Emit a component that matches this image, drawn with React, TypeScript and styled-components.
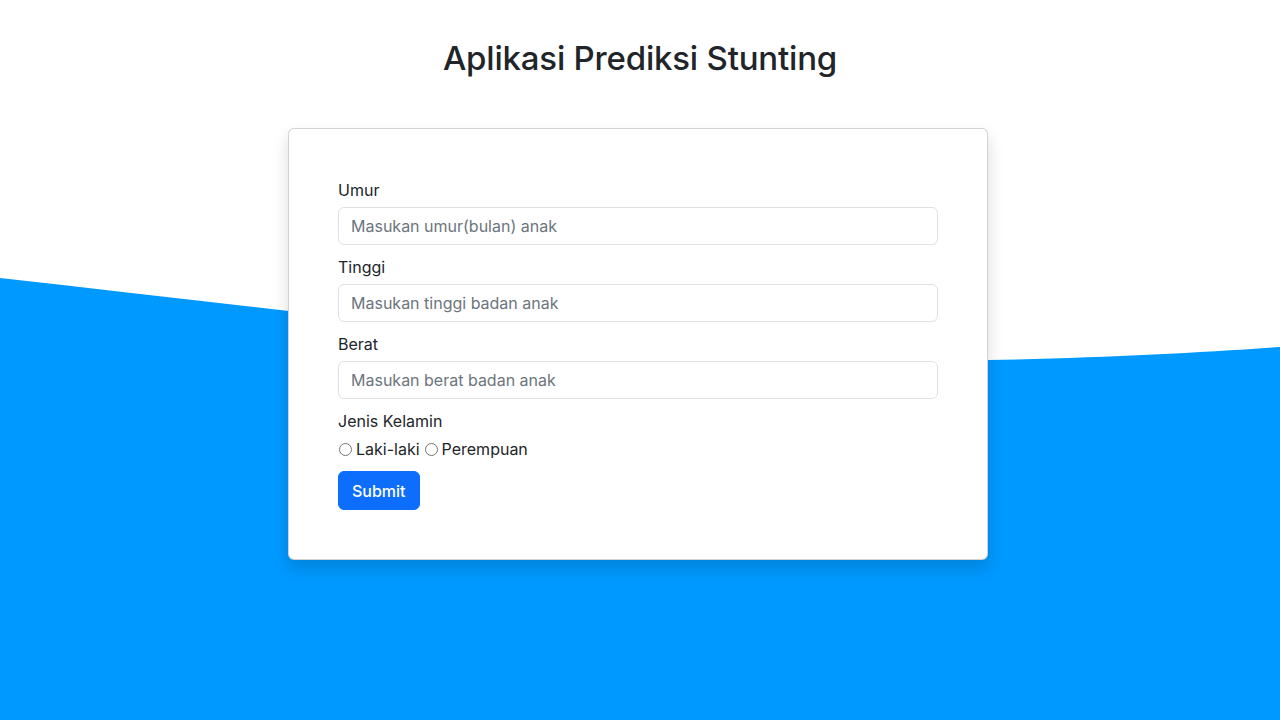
import React from "react";
import styled, { createGlobalStyle } from "styled-components";

const GlobalStyle = createGlobalStyle`
  * { box-sizing: border-box; }
  html, body { margin: 0; padding: 0; background: #fff; }
  body {
    font-family: Inter, "Liberation Sans", sans-serif;
    color: #212529;
    font-size: 16px;
    line-height: 1.5;
  }
`;

const Page = styled.div`
  position: relative;
  width: 100%;
  min-height: 720px;
  overflow: hidden;
`;

const Wave = styled.svg`
  position: absolute;
  left: 0;
  top: 0;
  width: 1280px;
  height: 720px;
  z-index: 0;
`;

const Content = styled.main`
  position: relative;
  z-index: 1;
  display: flex;
  flex-direction: column;
  align-items: center;
  padding-top: 38px;
`;

const Title = styled.h2`
  margin: 0 0 50px;
  font-size: 33px;
  font-weight: 500;
  line-height: 40px;
  color: #212529;
  letter-spacing: -0.2px;
`;

const Card = styled.div`
  width: 700px;
  margin-right: 4px;
  background: #fff;
  border: 1px solid rgba(0, 0, 0, 0.175);
  border-radius: 6px;
  box-shadow: 0 8px 16px rgba(0, 0, 0, 0.15);
  padding: 49px 49px 49px;
`;

const Form = styled.form`
  display: flex;
  flex-direction: column;
`;

const Group = styled.div`
  display: flex;
  flex-direction: column;
  margin-bottom: 10px;
`;

const Label = styled.label`
  display: block;
  font-size: 16px;
  line-height: 24px;
  margin-bottom: 5px;
`;

const Input = styled.input`
  width: 100%;
  height: 38px;
  padding: 6px 12px;
  font-family: inherit;
  font-size: 16px;
  color: #212529;
  border: 1px solid #dee2e6;
  border-radius: 6px;
  background: #fff;
  outline: none;
  &::placeholder { color: #6c757d; }
`;

const RadioRow = styled.div`
  display: flex;
  align-items: center;
  height: 24px;
  margin-top: -1px;
  font-size: 16px;
`;

const RadioLabel = styled.label`
  display: inline-flex;
  align-items: center;
  margin-right: 4px;
`;

const Radio = styled.input`
  width: 13px;
  height: 13px;
  margin: 0 4px 0 1px;
`;

const Button = styled.button`
  align-self: flex-start;
  margin-top: 10px;
  height: 39px;
  padding: 0 13px;
  font-family: inherit;
  font-size: 16px;
  font-weight: 500;
  color: #fff;
  background: #0d6efd;
  border: 1px solid #0d6efd;
  border-radius: 6px;
  cursor: pointer;
`;

export default function App() {
  return (
    <>
      <GlobalStyle />
      <Page>
        <Wave viewBox="0 0 1280 720" preserveAspectRatio="none" aria-hidden>
          <path
            fill="#0099ff"
            d="M0,278 C360,318 700,365 988,360 C1100,358 1200,353 1280,347 L1280,720 L0,720 Z"
          />
        </Wave>
        <Content>
          <Title>Aplikasi Prediksi Stunting</Title>
          <Card>
            <Form onSubmit={(e) => e.preventDefault()}>
              <Group>
                <Label htmlFor="umur">Umur</Label>
                <Input id="umur" placeholder="Masukan umur(bulan) anak" />
              </Group>
              <Group>
                <Label htmlFor="tinggi">Tinggi</Label>
                <Input id="tinggi" placeholder="Masukan tinggi badan anak" />
              </Group>
              <Group>
                <Label htmlFor="berat">Berat</Label>
                <Input id="berat" placeholder="Masukan berat badan anak" />
              </Group>
              <Label>Jenis Kelamin</Label>
              <RadioRow>
                <RadioLabel>
                  <Radio type="radio" name="jk" value="L" />
                  Laki-laki
                </RadioLabel>
                <RadioLabel>
                  <Radio type="radio" name="jk" value="P" />
                  Perempuan
                </RadioLabel>
              </RadioRow>
              <Button type="submit">Submit</Button>
            </Form>
          </Card>
        </Content>
      </Page>
    </>
  );
}
